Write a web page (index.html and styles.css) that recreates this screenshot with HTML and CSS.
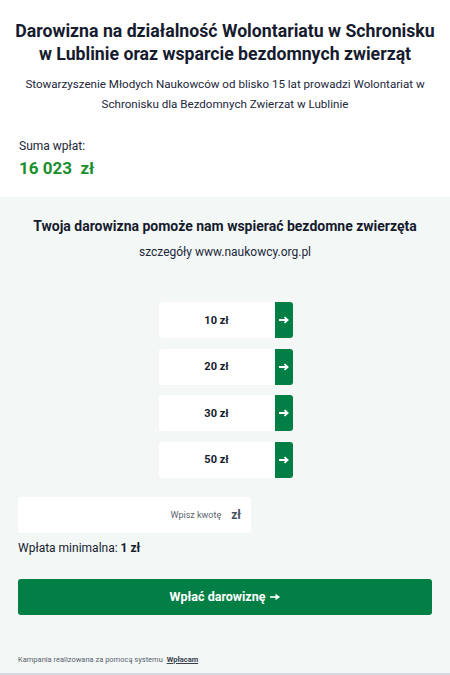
FILE: index.html
```html
<!DOCTYPE html>
<html lang="pl">
<head>
<meta charset="utf-8">
<link rel="stylesheet" href="styles.css">
</head>
<body>
<div class="page">
  <header class="top">
    <h1 class="title">Darowizna na działalność Wolontariatu w Schronisku w Lublinie oraz wsparcie bezdomnych zwierząt</h1>
    <p class="lead">Stowarzyszenie Młodych Naukowców od blisko 15 lat prowadzi Wolontariat w Schronisku dla Bezdomnych Zwierzat w Lublinie</p>
    <div class="sum">
      <div class="sum-label">Suma wpłat:</div>
      <div class="sum-value">16 023&nbsp; zł</div>
    </div>
  </header>
  <section class="donate">
    <h2 class="donate-title">Twoja darowizna pomoże nam wspierać bezdomne zwierzęta</h2>
    <p class="donate-link">szczegóły www.naukowcy.org.pl</p>
    <div class="amounts">
      <button class="amount"><span class="amount-val">10 zł</span><span class="amount-go"><svg viewBox="0 0 10 8" width="10" height="8"><path d="M0 4H8M5.5 1.2L8.6 4L5.5 6.8" fill="none" stroke="#fff" stroke-width="1.8"/></svg></span></button>
      <button class="amount"><span class="amount-val">20 zł</span><span class="amount-go"><svg viewBox="0 0 10 8" width="10" height="8"><path d="M0 4H8M5.5 1.2L8.6 4L5.5 6.8" fill="none" stroke="#fff" stroke-width="1.8"/></svg></span></button>
      <button class="amount"><span class="amount-val">30 zł</span><span class="amount-go"><svg viewBox="0 0 10 8" width="10" height="8"><path d="M0 4H8M5.5 1.2L8.6 4L5.5 6.8" fill="none" stroke="#fff" stroke-width="1.8"/></svg></span></button>
      <button class="amount"><span class="amount-val">50 zł</span><span class="amount-go"><svg viewBox="0 0 10 8" width="10" height="8"><path d="M0 4H8M5.5 1.2L8.6 4L5.5 6.8" fill="none" stroke="#fff" stroke-width="1.8"/></svg></span></button>
    </div>
    <div class="custom">
      <span class="custom-ph">Wpisz kwotę</span>
      <span class="custom-cur">zł</span>
    </div>
    <p class="min">Wpłata minimalna: <b>1 zł</b></p>
    <button class="submit">Wpłać darowiznę <svg class="submit-arrow" viewBox="0 0 10 8" width="10" height="8"><path d="M0 4H6.5" stroke="#fff" stroke-width="1.6"/><path d="M5.5 0.8L10 4L5.5 7.2Z" fill="#fff"/></svg></button>
    <p class="footer">Kampania realizowana za pomocą systemu <a class="brand">Wpłacam</a></p>
  </section>
</div>
</body>
</html>
```
FILE: styles.css
```css
* { box-sizing: border-box; }
html, body { margin: 0; padding: 0; background: #fff; }
body { font-family: Roboto, "Noto Sans", "Liberation Sans", sans-serif; color: #1b1f33; }
.page { width: 450px; min-height: 675px; display: flex; flex-direction: column; }
.top { padding: 20px 10px 18px; }
.title { margin: 0; font-size: 17.7px; line-height: 23px; font-weight: 700; text-align: center; color: #161b2e; }
.lead { margin: 8px 0 0; font-size: 11.6px; line-height: 20px; text-align: center; color: #22263a; }
.sum { margin-top: 24px; padding-left: 9px; }
.sum-label { font-size: 12px; line-height: 16px; color: #22263a; }
.sum-value { margin-top: 3px; font-size: 17px; line-height: 22px; font-weight: 700; color: #1a8f2c; }
.donate { flex: 1; background: #f3f8f6; padding: 19px 18px 0; border-bottom: 2px solid #d4d8df; display: flex; flex-direction: column; }
.donate-title { margin: 0; font-size: 14px; line-height: 20px; font-weight: 700; text-align: center; color: #161b2e; }
.donate-link { margin: 8px 0 0; font-size: 12px; line-height: 16px; text-align: center; color: #22263a; }
.amounts { margin-top: 42px; display: flex; flex-direction: column; align-items: center; gap: 10.5px; }
.amount { display: flex; width: 134px; height: 36px; padding: 0; border: 0; background: transparent; margin-left: 1px; font-family: inherit; cursor: pointer; }
.amount-val { flex: 1; background: #fff; border-radius: 3px 0 0 3px; display: flex; align-items: center; justify-content: center; font-size: 11px; font-weight: 700; color: #161b2e; }
.amount-go { width: 18px; background: #017f45; border-radius: 0 3px 3px 0; display: flex; align-items: center; justify-content: center; }
.custom { margin-top: 19px; width: 233px; height: 36px; background: #fff; border-radius: 3px; display: flex; align-items: center; justify-content: flex-end; padding-right: 10px; gap: 10px; }
.custom-ph { font-size: 9px; color: #5a5f6e; }
.custom-cur { font-size: 12px; font-weight: 700; color: #4a4f5e; }
.min { margin: 7px 0 0; font-size: 12px; line-height: 16px; color: #161b2e; }
.min b { font-weight: 700; }
.submit { margin-top: 23px; height: 36px; width: 100%; border: 0; border-radius: 3px; background: #017f45; color: #fff; font-family: inherit; font-size: 12.5px; font-weight: 700; cursor: pointer; display: flex; align-items: center; justify-content: center; gap: 5px; }
.submit-arrow { margin-top: 1px; }
.footer { margin: auto 0 0; padding: 0 0 9px; font-size: 7.5px; color: #5a5f6e; }
.brand { font-weight: 700; color: #3a3f4e; text-decoration: underline; margin-left: 2px; }
```
